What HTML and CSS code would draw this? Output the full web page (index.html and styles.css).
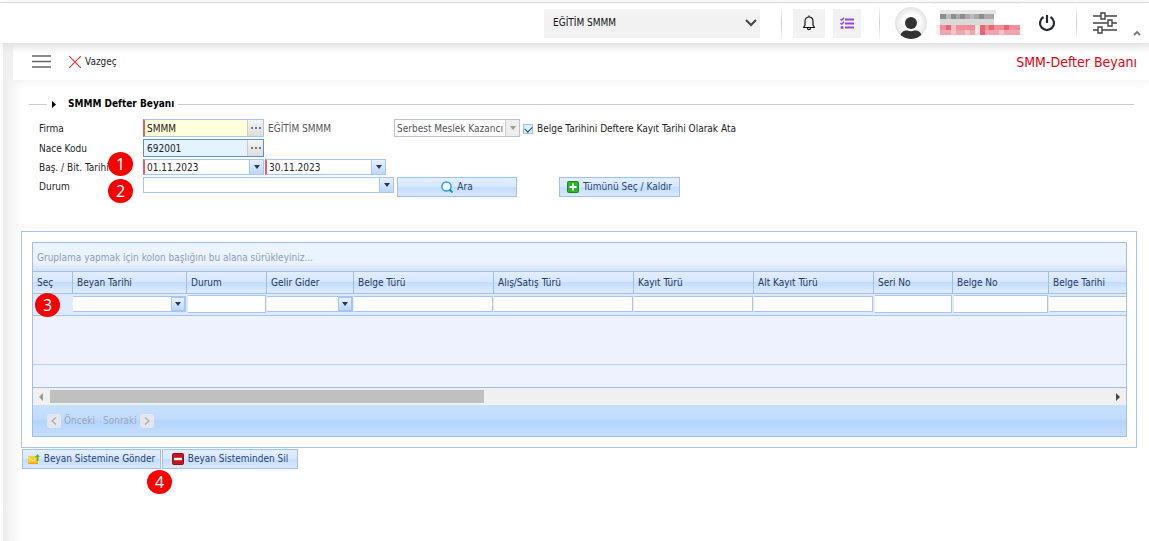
FILE: index.html
```
<!DOCTYPE html>
<html lang="tr">
<head>
    <meta charset="UTF-8">
    <meta name="viewport" content="width=device-width, initial-scale=1.0">
    <title>SMM-Defter Beyanı</title>
    <link rel="stylesheet" href="styles.css">
</head>
<body>
    <header class="topbar">
        <div class="company-select">
            <select aria-label="Firma seçimi">
                <option>EĞİTİM SMMM</option>
            </select>
            <svg class="company-arrow" width="12" height="8" viewBox="0 0 12 8"><path d="M1 1l5 5 5-5" fill="none" stroke="#444" stroke-width="2"/></svg>
        </div>
        <span class="divider"></span>
        <button class="top-btn bell-btn" aria-label="Bildirimler">
            <svg width="14" height="16" viewBox="0 0 14 16" fill="none" stroke="#111" stroke-width="1.2"><path d="M7 .5v1.500M1 12.500h12M1.500 12.500L3 10V6.500C3 3.500 4.800 2 7 2s4 1.500 4 4.500V10l1.500 2.500M5.500 13c0 2.300 3 2.300 3 0"/></svg>
        </button>
        <button class="top-btn task-btn" aria-label="Görevler">
            <svg width="14" height="13" viewBox="0 0 14 13" fill="none" stroke="#9747dd"><path d="M5 2.500h9M5 6.500h9M5 10.500h9" stroke-width="1.800"/><path d="M.5 2l1.200 1.200L4 .800M.5 6l1.200 1.200L4 4.800" stroke-width="1.300"/><rect x="1.200" y="9.700" width="1.600" height="1.600" fill="#9747dd"/></svg>
        </button>
        <span class="divider"></span>
        <svg class="avatar" width="32" height="32" viewBox="0 0 32 32">
            <defs>
                <radialGradient id="avatarBg"><stop offset=".5" stop-color="#fff"/><stop offset="1" stop-color="#e4e4e4"/></radialGradient>
                <clipPath id="avatarClip"><circle cx="16" cy="16" r="16"/></clipPath>
            </defs>
            <circle cx="16" cy="16" r="16" fill="url(#avatarBg)"/>
            <g fill="#333" clip-path="url(#avatarClip)"><circle cx="16" cy="16" r="6"/><path d="M5.500 28c1-4 5-5 7-4.500 2 1 5 1 7 0 2-.5 6 .5 7 4.500-3 3-6 4-10.500 4S8.500 31 5.500 28z"/></g>
        </svg>
        <svg class="user-name" width="88" height="32" viewBox="0 0 88 32" shape-rendering="crispEdges">
            <path d="M0 0h88v1H0z" fill="#f3f3f3"/>
            <path d="M8 7h56v4H8z" fill="#e6e6e6"/>
            <path d="M8 11h54v5H8z" fill="#aaa"/>
            <path d="M8 16h54v6H8z" fill="#dadada"/>
            <path d="M8 11h6v5H8zM19 11h5v5h-5zM28 11h5v5h-5zM47 11h5v5h-5z" fill="#8d8d8d"/>
            <path d="M14 11h5v5h-5zM38 11h4v5h-4z" fill="#bbb"/>
            <path d="M4 22h4v10H4z" fill="#fbeff0"/>
            <path d="M8 22h80v10H8z" fill="#f3a5ad"/>
            <path d="M8 22h80v5H8z" fill="#ee8f99"/>
            <path d="M14 22h5v5h-5zM48 22h5v10h-5zM57 22h5v5h-5zM72 22h5v5h-5z" fill="#e76873"/>
            <path d="M19 22h5v10h-5zM33 27h5v5h-5zM67 27h5v5h-5z" fill="#f7c3c8"/>
            <path d="M43 22h5v10h-5z" fill="#fae3e5"/>
        </svg>
        <button class="plain-btn power-btn" aria-label="Çıkış">
            <svg width="18" height="18" viewBox="0 0 18 18" fill="none" stroke="#22292f" stroke-width="2.200"><path d="M5.500 3a7 7 0 1 0 7 0M9 1v8"/></svg>
        </button>
        <span class="divider"></span>
        <button class="plain-btn settings-btn" aria-label="Ayarlar">
            <svg width="24" height="22" viewBox="0 0 24 22" fill="none" stroke="#444" stroke-width="1.400"><path d="M0 4h8M12 4h12M0 11h15M19 11h5M0 18h5M9 18h15"/><path d="M8 1h4v6H8zM15 8h4v6h-4zM5 15h4v6H5z"/></svg>
        </button>
        <button class="plain-btn collapse-btn" aria-label="Daralt">
            <svg width="8" height="6" viewBox="0 0 8 6"><path d="M1 5l3-3 3 3" fill="none" stroke="#777" stroke-width="1.800"/></svg>
        </button>
    </header>

    <main class="page">
        <div class="toolbar">
            <button class="plain-btn" aria-label="Menü">
                <svg width="19" height="13" viewBox="0 0 19 13"><path d="M0 1h19M0 6.500h19M0 12h19" stroke="#666" stroke-width="1.600"/></svg>
            </button>
            <button class="plain-btn cancel-btn">
                <svg width="12" height="12" viewBox="0 0 12 12"><path d="M0 0l12 12M12 0L0 12" stroke="#dd3340" stroke-width="1.200"/></svg>
                Vazgeç
            </button>
            <h1 class="page-title">SMM-Defter Beyanı</h1>
        </div>

        <div class="content">
            <div class="section-head">
                <span class="line short"></span>
                <svg width="4" height="7" viewBox="0 0 4 7"><path d="M0 0l4 3.500L0 7z" fill="#000"/></svg>
                <h2>SMMM Defter Beyanı</h2>
                <span class="line"></span>
            </div>

            <form class="filters">
                <div class="row">
                    <label class="caption" for="firma">Firma</label>
                    <div class="field code-field required yellow">
                        <input id="firma" type="text" value="SMMM">
                        <button type="button" class="dots-btn" aria-label="Firma seç"><i></i><i></i><i></i></button>
                    </div>
                    <span class="firma-name">EĞİTİM SMMM</span>
                    <div class="field select-field disabled">
                        <select aria-label="Kazanç türü" disabled>
                            <option>Serbest Meslek Kazancı</option>
                        </select>
                        <span class="drop-btn"></span>
                    </div>
                    <label class="check"><input type="checkbox" checked>Belge Tarihini Deftere Kayıt Tarihi Olarak Ata</label>
                </div>
                <div class="row">
                    <label class="caption" for="nace">Nace Kodu</label>
                    <div class="field code-field focused">
                        <input id="nace" type="text" value="692001">
                        <button type="button" class="dots-btn" aria-label="Nace kodu seç"><i></i><i></i><i></i></button>
                    </div>
                </div>
                <div class="row dates">
                    <label class="caption" for="bas">Baş. / Bit. Tarihi</label>
                    <div class="field date-field required">
                        <input id="bas" type="text" value="01.11.2023">
                        <button type="button" class="drop-btn" aria-label="Takvim"></button>
                    </div>
                    <div class="field date-field required">
                        <input type="text" value="30.11.2023" aria-label="Bitiş tarihi">
                        <button type="button" class="drop-btn" aria-label="Takvim"></button>
                    </div>
                    <span class="badge badge-1">1</span>
                </div>
                <div class="row status">
                    <label class="caption" for="durum">Durum</label>
                    <div class="field select-field wide">
                        <select id="durum"><option></option></select>
                        <span class="drop-btn"></span>
                    </div>
                    <button type="button" class="btn search-btn">
                        <svg width="12" height="12" viewBox="0 0 12 12"><circle cx="5.500" cy="5.500" r="4.600" fill="#eefaff" stroke="#2ba3d0" stroke-width="1.500"/><path d="M8.500 8.500l3 3" stroke="#1c7fae" stroke-width="1.800"/></svg>
                        Ara
                    </button>
                    <button type="button" class="btn all-btn">
                        <svg width="12" height="12" viewBox="0 0 12 12"><rect x=".5" y=".5" width="11" height="11" rx="1" fill="#28b428" stroke="#158a1a"/><path d="M6 2.500v7M2.500 6h7" stroke="#fff" stroke-width="2"/></svg>
                        Tümünü Seç / Kaldır
                    </button>
                    <span class="badge badge-2">2</span>
                </div>
            </form>

            <section class="panel">
                <div class="grid">
                    <div class="group-bar">Gruplama yapmak için kolon başlığını bu alana sürükleyiniz...</div>
                    <div class="table-wrap">
                        <table>
                            <colgroup>
                                <col class="c-sel"><col class="c-beyan"><col class="c-durum"><col class="c-gelir"><col class="c-wide"><col class="c-wide"><col class="c-mid"><col class="c-mid"><col class="c-seri"><col class="c-no"><col class="c-mid">
                            </colgroup>
                            <thead>
                                <tr>
                                    <th>Seç</th><th>Beyan Tarihi</th><th>Durum</th><th>Gelir Gider</th><th>Belge Türü</th><th>Alış/Satış Türü</th><th>Kayıt Türü</th><th>Alt Kayıt Türü</th><th>Seri No</th><th>Belge No</th><th>Belge Tarihi</th>
                                </tr>
                            </thead>
                            <tbody>
                                <tr class="filter-row">
                                    <td></td>
                                    <td><div class="cell"><input type="text" aria-label="Beyan Tarihi"><button class="drop-btn" aria-label="Takvim"></button></div></td>
                                    <td><div class="cell tall"><input type="text" aria-label="Durum"></div></td>
                                    <td><div class="cell"><input type="text" aria-label="Gelir Gider"><button class="drop-btn" aria-label="Liste"></button></div></td>
                                    <td><div class="cell"><input type="text" aria-label="Belge Türü"></div></td>
                                    <td><div class="cell"><input type="text" aria-label="Alış/Satış Türü"></div></td>
                                    <td><div class="cell"><input type="text" aria-label="Kayıt Türü"></div></td>
                                    <td><div class="cell"><input type="text" aria-label="Alt Kayıt Türü"></div></td>
                                    <td><div class="cell tall"><input type="text" aria-label="Seri No"></div></td>
                                    <td><div class="cell tall"><input type="text" aria-label="Belge No"></div></td>
                                    <td><div class="cell"><input type="text" aria-label="Belge Tarihi"></div></td>
                                </tr>
                            </tbody>
                        </table>
                    </div>
                    <span class="badge badge-3">3</span>
                    <div class="empty-area"></div>
                    <div class="footer-area"></div>
                    <div class="scrollbar">
                        <span class="arrow left"></span>
                        <div class="track"><div class="thumb"></div></div>
                        <span class="arrow right"></span>
                    </div>
                    <div class="pager">
                        <button disabled>
                            <svg width="14" height="14" viewBox="0 0 14 14"><rect width="14" height="14" rx="3" fill="#e3e6ea"/><path d="M9 3.500L5 7l4 3.500" fill="none" stroke="#aaa" stroke-width="1.200"/></svg>
                            Önceki
                        </button>
                        <button disabled>
                            Sonraki
                            <svg width="14" height="14" viewBox="0 0 14 14"><rect width="14" height="14" rx="3" fill="#e3e6ea"/><path d="M5 3.500L9 7l-4 3.500" fill="none" stroke="#aaa" stroke-width="1.200"/></svg>
                        </button>
                    </div>
                </div>
            </section>

            <div class="actions">
                <button class="btn send-btn">
                    <svg width="12" height="12" viewBox="0 0 12 12"><path d="M0 3h10v8H0z" fill="#f8cd2a"/><path d="M0 9.500h10V11H0z" fill="#eda512"/><path d="M0 4l5 4 5-4" fill="none" stroke="#fff0a0"/><path d="M9.500 1L12 4h-1.500v4h-2V4H7z" fill="#5fb52c"/></svg>
                    Beyan Sistemine Gönder
                </button>
                <button class="btn delete-btn">
                    <svg width="12" height="12" viewBox="0 0 12 12"><rect x=".5" y=".5" width="11" height="11" rx="1" fill="#c4161c" stroke="#8f1015"/><path d="M2 6h8" stroke="#fff" stroke-width="2.400"/></svg>
                    Beyan Sisteminden Sil
                </button>
                <span class="badge badge-4">4</span>
            </div>
        </div>
    </main>
</body>
</html>
```
FILE: styles.css
```
* {
    box-sizing: border-box;
}

body {
    margin: 0;
    min-height: 100vh;
    display: flex;
    flex-direction: column;
    font-family: "DejaVu Sans Condensed", "DejaVu Sans", sans-serif;
    font-size: 10px;
    line-height: 14px;
    color: #222;
    background: #fff;
}

button, input, select {
    font: inherit;
    color: inherit;
    margin: 0;
    padding: 0;
    border: 0;
    border-radius: 0;
    background: none;
    outline: none;
}

select {
    appearance: none;
}

svg {
    display: block;
    flex: none;
}

/* Top bar */
.topbar {
    position: relative;
    display: flex;
    align-items: center;
    justify-content: flex-end;
    height: 41px;
    margin-top: 2px;
    padding-right: 8px;
    border-top: 1px solid #d9d9d9;
    background: #fff;
    box-shadow: 0 2px 10px rgba(0,0,0,0.1);
}

.company-select {
    position: relative;
    width: 216px;
    height: 29px;
    margin-right: 21px;
    background: #f2f2f2;
}

.company-select select {
    width: 100%;
    height: 29px;
    padding-left: 9px;
    color: #111;
}

.company-arrow {
    position: absolute;
    right: 3px;
    top: 10px;
    pointer-events: none;
}

.divider {
    width: 1px;
    height: 36px;
    background: linear-gradient(#fff, #ccc, #fff);
}

.top-btn {
    display: flex;
    align-items: center;
    justify-content: center;
    height: 29px;
    background: #f2f2f2;
}

.bell-btn {
    width: 32px;
    margin: 0 8px 0 11px;
}

.task-btn {
    width: 28px;
    margin-right: 18px;
}

.avatar {
    margin: 0 5px 0 15px;
}

.user-name {
    align-self: flex-start;
}

.plain-btn {
    display: flex;
    align-items: center;
}

.power-btn {
    margin: 0 20px 0 18px;
}

.settings-btn {
    margin: 0 16px;
}

.collapse-btn {
    align-self: flex-end;
    margin-bottom: 7px;
}

/* Page */
.page {
    flex: 1;
    margin-left: 3px;
    background: linear-gradient(to right, #eee, #fff 20px);
}

.toolbar {
    display: flex;
    align-items: center;
    height: 37px;
    margin-left: 10px;
    padding: 0 12px 0 19px;
    background: linear-gradient(#f2f2f2, #fff 10px);
    box-shadow: 0 2px 8px rgba(0,0,0,0.06);
}

.cancel-btn {
    gap: 4px;
    margin-left: 18px;
}

.page-title {
    margin: 0 0 0 auto;
    font-size: 14px;
    line-height: 18px;
    font-weight: normal;
    color: #e00010;
}

.content {
    padding: 17px 12px 0 18px;
}

.section-head {
    display: flex;
    align-items: center;
    margin: 0 3px 0 8px;
}

.section-head h2 {
    margin: 0 4px 0 12px;
    font-size: 10px;
    line-height: 14px;
    color: #000;
}

.line {
    flex: 1;
    height: 1px;
    background: #ccc;
}

.line.short {
    flex: none;
    width: 18px;
    margin-right: 5px;
}

/* Filter form */
.filters {
    display: flex;
    flex-direction: column;
    gap: 2px;
    margin: 8px 0 0 18px;
}

.row {
    position: relative;
    display: flex;
    align-items: center;
    height: 18px;
}

.row.dates {
    height: 16px;
}

.row.status {
    height: 20px;
    align-items: flex-start;
}

.caption {
    flex: none;
    width: 104px;
    padding-top: 2px;
}

.status .caption {
    line-height: 16px;
}

.field {
    display: flex;
    flex: none;
    height: 18px;
    border: 1px solid #a9c5ee;
    background: #fff;
}

.field input {
    flex: 1;
    min-width: 0;
    padding: 2px 0 0 3px;
}

.field.required {
    border-left: 2px solid #ee5a66;
}

.field.required input {
    padding-left: 2px;
}

.code-field {
    width: 121px;
}

.date-field {
    width: 121px;
    height: 16px;
    margin-right: 1px;
}

.yellow {
    background: #ffffdc;
}

.focused {
    border-color: #5f8fc4;
    background: #e3f4fe;
}

.dots-btn {
    display: flex;
    align-items: center;
    justify-content: center;
    gap: 2px;
    width: 16px;
    border-left: 1px solid #ccc;
    background: linear-gradient(#f4f4f4, #ddd);
}

.dots-btn i {
    width: 2px;
    height: 2px;
    background: #777;
}

.drop-btn {
    display: flex;
    flex: none;
    align-items: center;
    justify-content: center;
    width: 14px;
    border: 1px solid #a9c5ee;
    background: linear-gradient(#e6f1ff, #bdd8fb);
}

.field .drop-btn {
    border-width: 0 0 0 1px;
}

.drop-btn::after {
    content: "";
    border: 3px solid transparent;
    border-top: 4px solid #23395a;
    border-bottom: 0;
}

.firma-name {
    flex: none;
    width: 130px;
    padding: 2px 0 0 4px;
    color: #555;
}

.select-field {
    width: 126px;
}

.select-field select {
    flex: 1;
    min-width: 0;
    padding: 2px 0 0 2px;
    opacity: 1;
}

.select-field.disabled {
    border-color: #bbc4d2;
    color: #555;
}

.disabled .drop-btn {
    border-color: #ccc;
    background: #eee;
}

.disabled .drop-btn::after {
    border-top-color: #999;
}

.select-field.wide {
    width: 251px;
    height: 16px;
}

.check {
    display: flex;
    align-items: center;
    gap: 4px;
    margin-left: 3px;
    padding-top: 2px;
}

.check input {
    appearance: none;
    width: 10px;
    height: 10px;
    border: 1px solid #9cc3ea;
    background: #dceeff;
}

.check input:checked::after {
    content: "";
    display: block;
    width: 6px;
    height: 4px;
    margin: 1px;
    border: solid #17477c;
    border-width: 0 0 1px 1px;
    transform: rotate(-45deg);
}

.btn {
    display: flex;
    align-items: center;
    justify-content: center;
    gap: 4px;
    height: 20px;
    border: 1px solid #a3c0e8;
    background: linear-gradient(#e2efff, #d9e9ff 45%, #c4ddfd 55%, #d9eaff);
    color: #2c4470;
}

.search-btn {
    width: 120px;
    margin-left: 3px;
}

.all-btn {
    width: 121px;
    margin-left: 42px;
}

/* Step markers */
.badge {
    position: absolute;
    display: flex;
    align-items: center;
    justify-content: center;
    width: 25px;
    height: 24px;
    border-radius: 50%;
    background: #f90000;
    color: #fff;
    font-family: "Noto Sans", sans-serif;
    font-size: 16px;
    line-height: 24px;
    z-index: 2;
}

.badge-1 {
    left: 69px;
    top: -7px;
}

.badge-2 {
    left: 69px;
    top: 2px;
}

.badge-3 {
    left: 2px;
    top: 50px;
}

.badge-4 {
    left: 125px;
    top: 21px;
}

/* Data grid */
.panel {
    margin-top: 34px;
    padding: 10px 9px 10px 10px;
    border: 1px solid #a9c5ee;
    background: #fff;
}

.grid {
    position: relative;
    border: 1px solid #9fbfe9;
    background: #edf2fe;
}

.group-bar {
    height: 28px;
    padding: 8px 4px 0;
    background: linear-gradient(#eaf3fe 70%, #d3e2f2);
    color: #8e9db5;
}

.table-wrap {
    overflow: hidden;
}

table {
    width: 1136px;
    table-layout: fixed;
    border-collapse: separate;
    border-spacing: 0;
}

.c-sel { width: 40px; }
.c-beyan { width: 114px; }
.c-durum { width: 80px; }
.c-gelir { width: 87px; }
.c-wide { width: 140px; }
.c-mid { width: 120px; }
.c-seri { width: 79px; }
.c-no { width: 96px; }

th {
    height: 23px;
    padding: 0 4px;
    border: solid #9fbfe9;
    border-width: 1px 1px 1px 0;
    background: linear-gradient(#e2eeff, #d7e7ff 45%, #c4dcfd 50%, #dfeeff);
    font-weight: normal;
    text-align: left;
    color: #23395a;
}

td {
    height: 22px;
    padding: 1px 0 0;
    border-bottom: 1px solid #a9c5ee;
    background: #deebff;
    vertical-align: top;
}

.cell {
    display: flex;
    height: 16px;
    margin: 1px 1px 0 0;
    border: 1px solid #a9c5ee;
    border-left: 0;
    background: #fff;
}

.cell.tall {
    height: 18px;
    margin: 0 1px;
}

.cell input {
    flex: 1;
    min-width: 0;
}

.empty-area {
    height: 49px;
    border-bottom: 1px solid #b5cff3;
}

.footer-area {
    height: 23px;
    border-bottom: 1px solid #9fbfe9;
}

.scrollbar {
    display: flex;
    align-items: center;
    height: 17px;
    background: #f0f0f0;
}

.arrow {
    border: 4px solid transparent;
}

.arrow.left {
    width: 4px;
    margin: 0 7px 0 6px;
    border-left: 0;
    border-right-color: #999;
}

.arrow.right {
    width: 4px;
    margin: 0 6px 0 7px;
    border-right: 0;
    border-left-color: #444;
}

.track {
    flex: 1;
}

.thumb {
    width: 41%;
    height: 13px;
    background: #c0c0c0;
}

.pager {
    display: flex;
    align-items: center;
    gap: 8px;
    height: 31px;
    padding-left: 14px;
    background: linear-gradient(#c9e0ff, #c0dbff 45%, #b3d4fe 52%, #c6deff);
}

.pager button {
    display: flex;
    align-items: center;
    gap: 3px;
    color: #9ea8b5;
}

.actions {
    position: relative;
    display: flex;
    gap: 1px;
    margin: 1px 0 0 1px;
}

.send-btn {
    width: 139px;
}

.delete-btn {
    width: 136px;
}
```
